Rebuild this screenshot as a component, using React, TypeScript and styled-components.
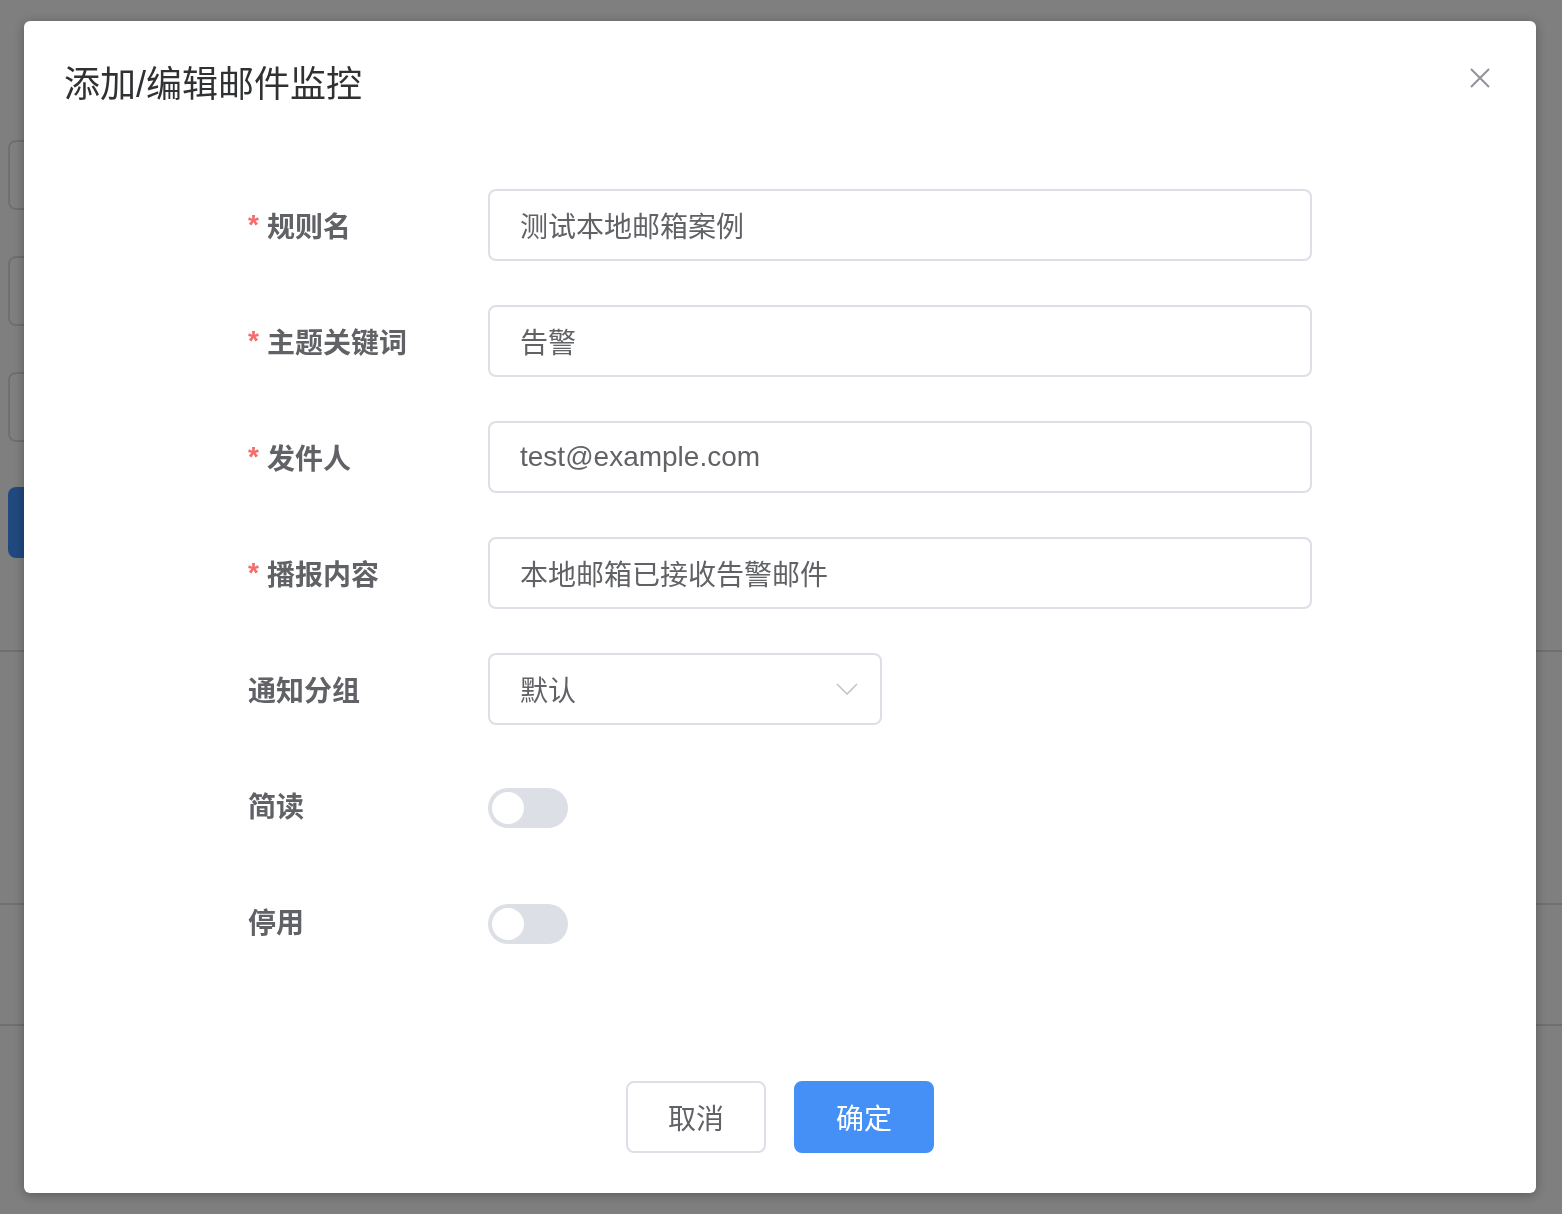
import React, { FC } from 'react';
import styled, { createGlobalStyle } from 'styled-components';

const GlobalStyle = createGlobalStyle`
  html, body {
    margin: 0;
    padding: 0;
  }
  body {
    font-family: 'Liberation Sans', 'Noto Sans CJK SC', sans-serif;
    background: #fff;
  }
  * {
    box-sizing: border-box;
  }
`;

// page behind the dialog, only edges of it show through
const Page = styled.div`
  height: 1214px;
  overflow: hidden;
  background: #fff;
  padding-top: 140px;
  display: flex;
  flex-direction: column;
`;

const GhostInput = styled.div`
  margin-left: 8px;
  width: 420px;
  height: 70px;
  border: 2px solid #dcdfe6;
  border-radius: 8px;
  margin-bottom: 46px;
`;

const GhostButton = styled.div`
  margin-left: 8px;
  width: 160px;
  height: 71px;
  border-radius: 8px;
  background: #3f93ff;
  margin-top: -1px;
`;

const Rule = styled.div<{ $gap: number }>`
  height: 2px;
  background: #dcdce6;
  margin-top: ${p => p.$gap}px;
`;

const Overlay = styled.div`
  position: fixed;
  inset: 0;
  background: rgba(0, 0, 0, 0.5);
  display: flex;
  align-items: center;
  justify-content: center;
`;

const Dialog = styled.div`
  width: 1512px;
  margin-left: -2px;
  background: #fff;
  border-radius: 6px;
  box-shadow: 0 2px 12px rgba(0, 0, 0, 0.3);
  display: flex;
  flex-direction: column;
`;

const Header = styled.div`
  padding: 40px 46px 0 40px;
  display: flex;
  justify-content: space-between;
  align-items: flex-start;
`;

const Title = styled.h2`
  margin: 0;
  font-size: 36px;
  line-height: 48px;
  font-weight: 400;
  color: #303133;
`;

const CloseButton = styled.button`
  width: 20px;
  height: 20px;
  margin-top: 7px;
  padding: 0;
  border: none;
  background: none;
  cursor: pointer;
  display: flex;
`;

const Form = styled.div`
  width: 1064px;
  margin: 80px auto 0;
  display: flex;
  flex-direction: column;
  gap: 44px;
`;

const Row = styled.div`
  display: flex;
  align-items: center;
  height: 72px;
`;

const Label = styled.label`
  width: 240px;
  flex-shrink: 0;
  font-size: 28px;
  font-weight: 700;
  color: #606266;
  display: flex;
  align-items: center;
`;

const Star = styled.span`
  color: #f56c6c;
  margin-right: 8px;
`;

const Input = styled.div<{ $width?: number }>`
  width: ${p => (p.$width ? `${p.$width}px` : '100%')};
  height: 72px;
  border: 2px solid #dcdfe6;
  border-radius: 8px;
  padding: 0 22px 0 30px;
  display: flex;
  align-items: center;
  justify-content: space-between;
  font-size: 28px;
  color: #606266;
`;

const Switch = styled.div`
  width: 80px;
  height: 40px;
  margin-top: 6px;
  border-radius: 20px;
  background: #dcdfe6;
  padding: 4px;
  display: flex;
`;

const Knob = styled.span`
  width: 32px;
  height: 32px;
  border-radius: 50%;
  background: #fff;
`;

const Footer = styled.div`
  padding: 124px 0 40px;
  display: flex;
  justify-content: center;
  gap: 28px;
`;

const Button = styled.button<{ $primary?: boolean }>`
  width: 140px;
  height: 72px;
  border-radius: 8px;
  font-family: inherit;
  font-size: 28px;
  cursor: pointer;
  border: 2px solid ${p => (p.$primary ? '#4590f6' : '#dcdfe6')};
  background: ${p => (p.$primary ? '#4590f6' : '#fff')};
  color: ${p => (p.$primary ? '#fff' : '#606266')};
`;

const Chevron: FC = () => (
  <svg width='22' height='12' viewBox='0 0 22 12' fill='none'>
    <path d='M1 1l10 10L21 1' stroke='#c0c4cc' strokeWidth='1.6' />
  </svg>
);

type Field = { label: string; value: string; required?: boolean };

const fields: Field[] = [
  { label: '规则名', value: '测试本地邮箱案例', required: true },
  { label: '主题关键词', value: '告警', required: true },
  { label: '发件人', value: 'test@example.com', required: true },
  { label: '播报内容', value: '本地邮箱已接收告警邮件', required: true },
];

const App: FC = () => {
  return (
    <>
      <GlobalStyle />
      <Page>
        <GhostInput />
        <GhostInput />
        <GhostInput />
        <GhostButton />
        <Rule $gap={92} />
        <Rule $gap={251} />
        <Rule $gap={119} />
      </Page>
      <Overlay>
        <Dialog>
          <Header>
            <Title>添加/编辑邮件监控</Title>
            <CloseButton aria-label='close'>
              <svg width='20' height='20' viewBox='0 0 20 20'>
                <path d='M1 1l18 18M19 1L1 19' stroke='#909399' strokeWidth='2' />
              </svg>
            </CloseButton>
          </Header>
          <Form>
            {fields.map(f => (
              <Row key={f.label}>
                <Label>
                  {f.required && <Star>*</Star>}
                  {f.label}
                </Label>
                <Input>{f.value}</Input>
              </Row>
            ))}
            <Row>
              <Label>通知分组</Label>
              <Input $width={394}>
                默认
                <Chevron />
              </Input>
            </Row>
            <Row>
              <Label>简读</Label>
              <Switch>
                <Knob />
              </Switch>
            </Row>
            <Row>
              <Label>停用</Label>
              <Switch>
                <Knob />
              </Switch>
            </Row>
          </Form>
          <Footer>
            <Button>取消</Button>
            <Button $primary>确定</Button>
          </Footer>
        </Dialog>
      </Overlay>
    </>
  );
};

export default App;
